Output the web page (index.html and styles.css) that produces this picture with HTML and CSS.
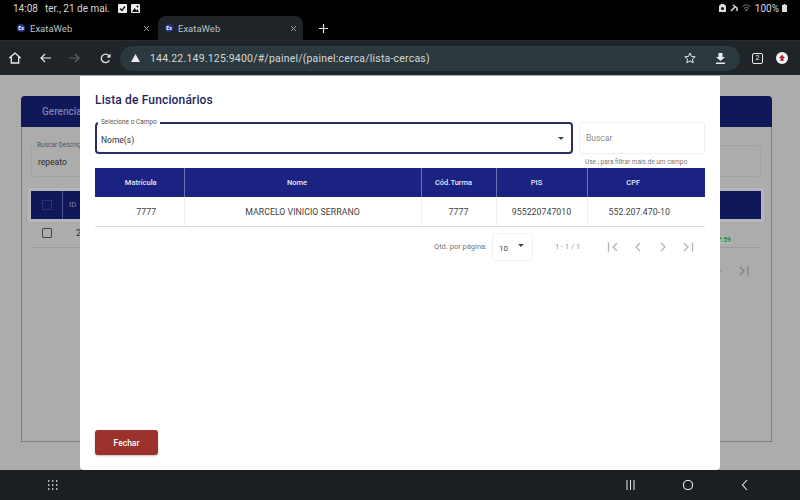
FILE: index.html
```html
<!DOCTYPE html>
<html lang="pt-br">
<head>
    <meta charset="UTF-8">
    <meta name="viewport" content="width=device-width, initial-scale=1.0">
    <title>ExataWeb</title>
    <link rel="stylesheet" href="styles.css">
</head>
<body>

    <!-- Barra de status -->
    <div class="status-bar">
        <span class="status-time">14:08</span>
        <span class="status-date">ter., 21 de mai.</span>
        <svg class="status-icon" width="9" height="9" viewBox="0 0 9 9"><rect width="9" height="9" rx="1" fill="#eee"/><path d="M2 4.500l2 2 3-4" fill="none" stroke="#111" stroke-width="1.300"/></svg>
        <svg class="status-icon" width="9" height="9" viewBox="0 0 9 9"><rect width="9" height="9" rx="1" fill="#eee"/><path d="M1 8l2.500-4 2 2.500 1-1.500 1.500 3z" fill="#111"/><circle cx="6.500" cy="2.500" r="1" fill="#111"/></svg>
        <div class="status-right">
            <svg width="7" height="8" viewBox="0 0 7 8"><path d="M2 0h3l2 2v6H0V2z" fill="#ddd"/><circle cx="3.500" cy="4.500" r="1.500" fill="#111"/></svg>
            <svg width="8" height="8" viewBox="0 0 8 8"><path d="M1 7l4-4M3 1l4 3v3" fill="none" stroke="#ddd" stroke-width="1.500"/></svg>
            <svg width="9" height="8" viewBox="0 0 9 8"><path d="M0.500 2.500a6 6 0 0 1 8 0M2 4.300a4 4 0 0 1 5 0M4.500 7l-1-1.200a2 2 0 0 1 2 0z" fill="none" stroke="#999" stroke-width="0.800"/></svg>
            <span class="status-battery">100%</span>
            <svg width="5" height="8" viewBox="0 0 5 8"><path d="M1.500 0h2v1H5v7H0V1h1.500z" fill="#ddd"/></svg>
        </div>
    </div>

    <!-- Abas -->
    <div class="tab-bar">
        <div class="tab">
            <span class="tab-favicon">Ex</span>
            <span class="tab-title">ExataWeb</span>
            <svg class="tab-close" width="7" height="7" viewBox="0 0 7 7"><path d="M1 1l5 5M6 1l-5 5" stroke="#9aa0a6" stroke-width="1"/></svg>
        </div>
        <div class="tab tab-active">
            <span class="tab-favicon">Ex</span>
            <span class="tab-title">ExataWeb</span>
            <svg class="tab-close" width="7" height="7" viewBox="0 0 7 7"><path d="M1 1l5 5M6 1l-5 5" stroke="#9aa0a6" stroke-width="1"/></svg>
        </div>
        <svg class="tab-new" width="9" height="9" viewBox="0 0 9 9"><path d="M4.500 0v9M0 4.500h9" stroke="#e8eaed" stroke-width="1.200"/></svg>
    </div>

    <!-- Barra de endereço -->
    <div class="toolbar">
        <svg class="tool-home" width="12" height="12" viewBox="0 0 12 12"><path d="M6 1L1 5.500h1.300V11h7.400V5.500H11z" fill="none" stroke="#e8eaed" stroke-width="1.300"/></svg>
        <svg class="tool-back" width="11" height="10" viewBox="0 0 11 10"><path d="M11 5H1.500M5 1L1 5l4 4" fill="none" stroke="#e8eaed" stroke-width="1.200"/></svg>
        <svg class="tool-forward" width="11" height="10" viewBox="0 0 11 10"><path d="M0 5h9.500M6 1l4 4-4 4" fill="none" stroke="#5f6368" stroke-width="1.200"/></svg>
        <svg class="tool-reload" width="11" height="11" viewBox="0 0 11 11"><path d="M9.300 7.200A4.200 4.200 0 1 1 8.700 2.600" fill="none" stroke="#e8eaed" stroke-width="1.300"/><path d="M10.500 0.500v4h-4z" fill="#e8eaed"/></svg>
        <div class="omnibox">
            <svg width="9" height="8" viewBox="0 0 9 8"><path d="M4.500 0L9 8H0z" fill="#e8eaed"/></svg>
            <span class="omnibox-url">144.22.149.125:9400/#/painel/(painel:cerca/lista-cercas)</span>
            <svg class="omnibox-star" width="12" height="12" viewBox="0 0 12 12"><path d="M6 1l1.500 3.400 3.700.4-2.800 2.400.8 3.600L6 8.900l-3.200 1.900.8-3.600L.8 4.800l3.700-.4z" fill="none" stroke="#e8eaed" stroke-width="1"/></svg>
            <svg class="omnibox-download" width="11" height="11" viewBox="0 0 11 11"><path d="M3.500 0h4v4H10L5.500 8 1 4h2.500zM1 9.500h9V11H1z" fill="#e8eaed"/></svg>
        </div>
        <span class="tab-count">2</span>
        <svg class="tool-profile" width="12" height="12" viewBox="0 0 12 12"><circle cx="6" cy="6" r="6" fill="#f4f4f4"/><path d="M6 2.700L9 6H7.500v3h-3V6H3z" fill="#b3263a"/></svg>
    </div>

    <!-- Conteúdo da página -->
    <div class="viewport">
        <div class="page">
            <div class="card">
                <div class="card-head">Gerenciar Cercas</div>
                <div class="card-body">
                    <div class="search-box">
                        <span class="search-label">Buscar Descrição</span>
                        <span class="search-value">repeato</span>
                    </div>
                    <div class="back-table-head">
                        <span class="back-check"></span>
                        <span class="back-id">ID</span>
                    </div>
                    <div class="back-table-row">
                        <span class="back-check back-check-row"></span>
                        <span class="back-id-value">2</span>
                        <span class="back-time">17:59</span>
                    </div>
                    <div class="back-pager">
                        <svg width="12" height="10" viewBox="0 0 12 10"><path d="M4 1l4 4-4 4" fill="none" stroke="#9a9a9a" stroke-width="1.300"/></svg>
                        <svg width="12" height="10" viewBox="0 0 12 10"><path d="M2 1l4 4-4 4M10 0.500v9" fill="none" stroke="#7d7d7d" stroke-width="1.300"/></svg>
                    </div>
                </div>
            </div>
        </div>

        <!-- Modal -->
        <div class="modal">
            <h2 class="modal-title">Lista de Funcionários</h2>

            <div class="filters">
                <div class="select-field">
                    <span class="select-label">Selecione o Campo</span>
                    <span class="select-value">Nome(s)</span>
                    <span class="select-arrow"></span>
                </div>
                <div class="search-field">
                    <div class="search-input">Buscar</div>
                    <div class="search-hint">Use ; para filtrar mais de um campo</div>
                </div>
            </div>

            <table class="emp-table">
                <thead>
                    <tr>
                        <th class="col-mat">Matrícula</th>
                        <th class="col-nome">Nome</th>
                        <th class="col-turma">Cód.Turma</th>
                        <th class="col-pis">PIS</th>
                        <th class="col-cpf">CPF</th>
                    </tr>
                </thead>
                <tbody>
                    <tr>
                        <td class="cell-mat">7777</td>
                        <td>MARCELO VINICIO SERRANO</td>
                        <td>7777</td>
                        <td>955220747010</td>
                        <td class="cell-cpf">552.207.470-10</td>
                    </tr>
                </tbody>
            </table>

            <div class="pager">
                <span class="pager-label">Qtd. por página:</span>
                <div class="pager-size">
                    <span>10</span>
                    <span class="pager-arrow"></span>
                </div>
                <span class="pager-range">1 - 1 / 1</span>
                <div class="pager-icons">
                    <svg width="12" height="10" viewBox="0 0 12 10"><path d="M1.500 0.500v9M10 1L6 5l4 4" fill="none" stroke="#b4b4b4" stroke-width="1.300"/></svg>
                    <svg width="12" height="10" viewBox="0 0 12 10"><path d="M8 1L4 5l4 4" fill="none" stroke="#b4b4b4" stroke-width="1.300"/></svg>
                    <svg width="12" height="10" viewBox="0 0 12 10"><path d="M4 1l4 4-4 4" fill="none" stroke="#b4b4b4" stroke-width="1.300"/></svg>
                    <svg width="12" height="10" viewBox="0 0 12 10"><path d="M2 1l4 4-4 4M10.500 0.500v9" fill="none" stroke="#b4b4b4" stroke-width="1.300"/></svg>
                </div>
            </div>

            <button class="btn-close" type="button">Fechar</button>
        </div>
    </div>

    <!-- Barra de navegação -->
    <div class="nav-bar">
        <svg class="nav-apps" width="10" height="10" viewBox="0 0 10 10"><path d="M0 1h2M4 1h2M8 1h2M0 5h2M4 5h2M8 5h2M0 9h2M4 9h2M8 9h2" stroke="#e8e8e8" stroke-width="1.600" stroke-dasharray="1.400 .6"/></svg>
        <div class="nav-right">
            <svg width="9" height="10" viewBox="0 0 9 10"><path d="M1 0v10M4.500 0v10M8 0v10" stroke="#e8e8e8" stroke-width="1"/></svg>
            <svg width="10" height="10" viewBox="0 0 10 10"><rect x="0.500" y="0.500" width="9" height="9" rx="4" fill="none" stroke="#e8e8e8" stroke-width="1.100"/></svg>
            <svg width="7" height="12" viewBox="0 0 7 12"><path d="M6 1L1.500 6 6 11" fill="none" stroke="#e8e8e8" stroke-width="1.100"/></svg>
        </div>
    </div>

</body>
</html>
```

FILE: styles.css
```css
/* Reset */
body, h2, table, th, td, button {
    margin: 0;
    padding: 0;
}

body {
    width: 800px;
    height: 500px;
    overflow: hidden;
    display: flex;
    flex-direction: column;
    font-family: Roboto, "Liberation Sans", sans-serif;
    background-color: #000;
}

/* Barra de status */
.status-bar {
    height: 16px;
    flex: none;
    display: flex;
    align-items: center;
    padding: 0 13px 0 13px;
    gap: 4px;
    color: #d8d8d8;
    font-size: 10px;
}

.status-date {
    margin: 0 4px 0 3px;
}

.status-right {
    margin-left: auto;
    display: flex;
    align-items: center;
    gap: 4px;
}

.status-battery {
    margin-right: -1px;
}

/* Abas */
.tab-bar {
    height: 24px;
    flex: none;
    display: flex;
    align-items: center;
}

.tab {
    width: 158px;
    height: 24px;
    box-sizing: border-box;
    display: flex;
    align-items: center;
    padding: 0 8px 0 17px;
    color: #bdc1c6;
    font-size: 9.500px;
}

.tab-active {
    width: 145px;
    padding: 0 6px 0 7px;
    background-color: #1f2428;
    border-radius: 8px 8px 0 0;
}

.tab-favicon {
    width: 8px;
    height: 8px;
    border-radius: 50%;
    margin-right: 5px;
    background-color: #2a2f8a;
    color: #fff;
    font-size: 5px;
    font-weight: bold;
    line-height: 8px;
    text-align: center;
}

.tab-close {
    margin-left: auto;
}

.tab-new {
    margin-left: 16px;
}

/* Barra de endereço */
.toolbar {
    height: 35px;
    flex: none;
    box-sizing: border-box;
    display: flex;
    align-items: center;
    background-color: #1f2428;
    border-top: 1px solid #262b2f;
}

.tool-home {
    margin-left: 9px;
}

.tool-back {
    margin-left: 19px;
}

.tool-forward {
    margin-left: 18px;
}

.tool-reload {
    margin-left: 20px;
}

.omnibox {
    width: 620px;
    height: 25px;
    margin-left: 9px;
    box-sizing: border-box;
    display: flex;
    align-items: center;
    padding: 0 14.500px 0 11px;
    background-color: #2b393f;
    border-radius: 13px;
}

.omnibox-url {
    margin-left: 10px;
    color: #d4d8da;
    font-size: 10.500px;
    letter-spacing: 0.2px;
}

.omnibox-star {
    margin-left: auto;
}

.omnibox-download {
    margin-left: 18.500px;
}

.tab-count {
    width: 9px;
    height: 9px;
    margin-left: 12px;
    border: 1px solid #e8eaed;
    border-radius: 2px;
    color: #e8eaed;
    font-size: 7px;
    line-height: 9px;
    text-align: center;
}

.tool-profile {
    margin-left: 13px;
}

/* Página ao fundo */
.viewport {
    flex: 1;
    position: relative;
    background-color: #acacac;
    overflow: hidden;
}

.page {
    padding: 21px 28px 0 21px;
}

.card {
    height: 346px;
    box-sizing: border-box;
    border: 1px solid #7f7f7f;
    border-top: none;
    border-radius: 4px 4px 0 0;
}

.card-head {
    height: 31px;
    margin: 0 -1px;
    padding-left: 21px;
    background-color: #10185a;
    border-radius: 4px 4px 0 0;
    color: #7b81b0;
    font-size: 10px;
    font-weight: 500;
    line-height: 31px;
}

.card-body {
    padding: 18px 10px 0 9px;
}

.search-box {
    position: relative;
    height: 32px;
    box-sizing: border-box;
    padding: 11px 6px 0;
    border: 1px solid #a2a2a2;
    border-radius: 3px;
}

.search-label {
    position: absolute;
    top: -4px;
    left: 3px;
    padding: 0 2px;
    background-color: #acacac;
    color: #555;
    font-size: 6.500px;
    line-height: 7px;
}

.search-value {
    display: block;
    color: #2c2c2c;
    font-size: 8.500px;
    line-height: 10px;
}

.back-table-head {
    height: 28px;
    margin-top: 14px;
    display: flex;
    align-items: center;
    background-color: #10185a;
    box-shadow: 0 0 0 3px #b5b5bb;
    color: #7b81b0;
    font-size: 8px;
}

.back-check {
    width: 8px;
    height: 8px;
    margin-left: 11px;
    border: 1px solid #2b3375;
}

.back-id {
    margin-left: 10px;
    padding-left: 6px;
    line-height: 28px;
    border-left: 1px solid #4a5190;
}

.back-table-row {
    height: 29px;
    box-sizing: border-box;
    display: flex;
    align-items: center;
    border-bottom: 1px solid #9c9c9c;
    font-size: 9px;
    color: #333;
}

.back-check-row {
    margin-left: 11px;
    border: 1px solid #444;
    border-radius: 1px;
}

.back-id-value {
    margin-left: 24px;
}

.back-time {
    margin-left: auto;
    margin-right: 29px;
    margin-top: 14px;
    padding: 0 1px;
    background-color: #a9bba9;
    color: #0c6a10;
    font-size: 7px;
}

.back-pager {
    display: flex;
    justify-content: flex-end;
    gap: 13px;
    padding: 18px 11px 0 0;
}

/* Modal */
.modal {
    position: absolute;
    top: 1px;
    left: 80px;
    width: 640px;
    height: 394px;
    box-sizing: border-box;
    display: flex;
    flex-direction: column;
    padding: 16px 15px 15px;
    background-color: #fff;
    border-radius: 0 0 4px 4px;
}

.modal-title {
    color: #1f2460;
    font-size: 12px;
    font-weight: 500;
    line-height: 16px;
    letter-spacing: 0.15px;
}

.filters {
    display: flex;
    gap: 6px;
    margin-top: 14px;
}

.select-field {
    position: relative;
    width: 478px;
    height: 32px;
    box-sizing: border-box;
    display: flex;
    align-items: center;
    padding-left: 4px;
    border: 2px solid #2a2b63;
    border-radius: 4px;
}

.select-label {
    position: absolute;
    top: -5px;
    left: 1px;
    padding: 0 3px;
    background-color: #fff;
    color: #555;
    font-size: 6.500px;
    line-height: 7px;
}

.select-value {
    margin-top: 4px;
    color: #333;
    font-size: 8.500px;
}

.select-arrow, .pager-arrow {
    width: 0;
    height: 0;
    border-top: 3px solid #444;
    border-left: 3px solid transparent;
    border-right: 3px solid transparent;
}

.select-arrow {
    margin-left: auto;
    margin-right: 7px;
}

.search-field {
    flex: 1;
    height: 46px;
    overflow: hidden;
}

.search-input {
    height: 32px;
    box-sizing: border-box;
    padding-left: 6px;
    border: 1px solid #f0f0f0;
    border-radius: 3px;
    color: #8a8a8a;
    font-size: 8.500px;
    line-height: 30px;
}

.search-hint {
    margin-top: 4px;
    padding-left: 6px;
    color: #777;
    font-size: 6.500px;
    line-height: 8px;
}

/* Tabela */
.emp-table {
    width: 610px;
    border-collapse: collapse;
    table-layout: fixed;
}

.emp-table th {
    box-sizing: border-box;
    height: 29px;
    padding: 0;
    background-color: #1a2382;
    border-right: 1px solid #6d74bd;
    color: #e6e7f3;
    font-size: 7.500px;
    font-weight: 500;
    text-align: center;
}

.emp-table th:last-child, .emp-table td:last-child {
    border-right: none;
}

.emp-table td {
    height: 29px;
    padding: 0;
    border-right: 1px solid #f0f0f0;
    border-bottom: 1px solid #dcdcdc;
    color: #444;
    font-size: 8.800px;
    text-align: center;
}

.col-mat { width: 89px; }
.col-nome { width: 237px; }
.col-turma { width: 75px; }
.col-pis { width: 91px; }

.emp-table th.col-mat { padding-left: 3px; }
.emp-table th.col-nome { padding-right: 11px; }
.emp-table th.col-turma { padding-right: 10px; }
.emp-table th.col-pis { padding-right: 10px; }
.emp-table th.col-cpf { padding-right: 26px; }

.emp-table td.cell-mat { padding-left: 14px; }
.emp-table td.cell-cpf { padding-right: 14px; }

/* Paginação */
.pager {
    display: flex;
    align-items: center;
    margin-top: 6px;
    height: 27px;
    color: #777;
    font-size: 7.500px;
}

.pager-label {
    margin-left: 339px;
}

.pager-size {
    width: 41px;
    height: 28px;
    box-sizing: border-box;
    display: flex;
    align-items: flex-start;
    justify-content: space-between;
    margin-left: 5px;
    padding: 10px 8px 0 6px;
    border: 1px solid #f2f2f2;
    border-radius: 3px;
    color: #444;
    font-size: 8px;
}

.pager-arrow {
    margin-top: 0;
}

.pager-range {
    margin-left: 22px;
    color: #999;
}

.pager-icons {
    display: flex;
    gap: 13px;
    margin-left: 27px;
}

.btn-close {
    width: 63px;
    height: 25px;
    margin-top: auto;
    background-color: #9b332c;
    border: none;
    border-radius: 3px;
    box-shadow: 0 1px 2px rgba(0, 0, 0, 0.25);
    color: #fff;
    font-family: inherit;
    font-size: 8.500px;
    font-weight: 500;
}

/* Barra de navegação */
.nav-bar {
    height: 30px;
    flex: none;
    display: flex;
    align-items: center;
    padding-left: 48px;
    background-color: #1b1f22;
}

.nav-right {
    margin-left: auto;
    margin-right: 52px;
    display: flex;
    align-items: center;
    gap: 48px;
}
```
